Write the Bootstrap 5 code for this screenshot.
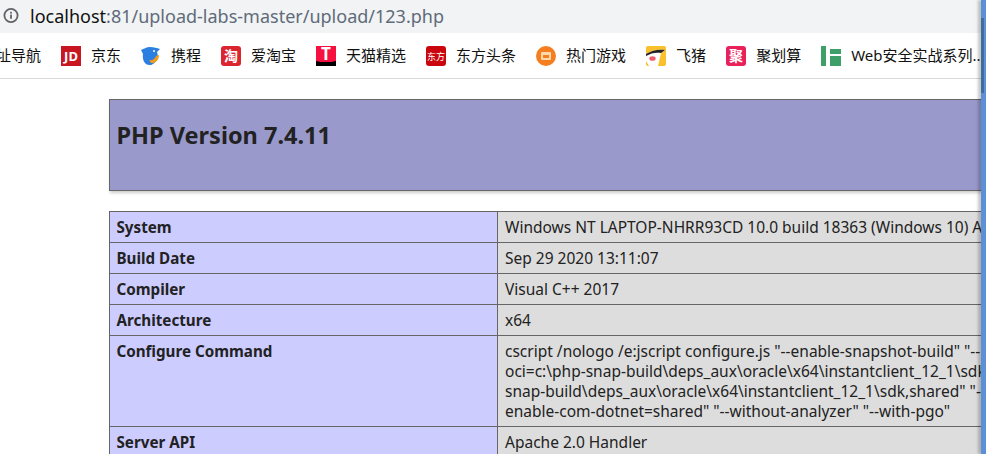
<!DOCTYPE html>
<html lang="zh"><head><meta charset="utf-8"><title>phpinfo</title>
<link href="https://cdn.jsdelivr.net/npm/bootstrap@5.3.0/dist/css/bootstrap.min.css" rel="stylesheet">
<style>
html,body{margin:0;height:454px;overflow:hidden;background:#fff}
body{font-family:"Noto Sans","Noto Sans CJK SC",sans-serif;color:#222}
.chrome-url{height:33px;background:#f1f3f4;padding-left:2px;font-size:18px;line-height:33px;color:#5f6b7a;white-space:nowrap}
.chrome-url b{font-weight:400;color:#111}
.url-ico{flex:none;margin-right:9px;margin-top:-2px}
.chrome-marks{height:46px;border-bottom:1px solid #d9d9d9;font-size:15px;color:#111;white-space:nowrap;overflow:hidden;gap:20px}
.mark-item{flex:none;gap:10px}
.mark-first{margin-left:-19px}
.mark-ico{width:20px;height:20px;flex:none;display:block}
.page-area{width:981px;overflow:hidden;padding:20px 0 0 109px}
.php-head{width:960px;height:92px;background:#9999cc;border:1px solid #666;box-shadow:1px 2px 3px #ccc;padding:0 6.5px;margin-bottom:20px}
.php-head h1{font-size:23.5px;font-weight:700;line-height:1;margin:0;padding-top:24px;color:#222}
.php-tbl{width:960px;border-collapse:collapse;table-layout:fixed;font-size:15.5px;line-height:20px}
.php-tbl td{border:1px solid #666;padding:5px 7px 5px;vertical-align:top;background:#ddd;overflow:hidden;white-space:nowrap}
.php-tbl td:first-child{width:388px;background:#ccf;font-weight:700;font-size:15.2px;padding-left:6.5px}
.bar{width:5px;height:454px;right:0;top:0;background:#5b8fd6;box-shadow:-3px 0 3px rgba(0,0,0,.22)}
.bar-thumb{width:3px;height:75px;margin-top:18px;background:#3f6d9e}
</style></head><body>
<div class="chrome-url d-flex align-items-center">
<svg width="19" height="19" viewBox="0 0 19 19" class="url-ico"><circle cx="9" cy="9.5" r="6.6" fill="none" stroke="#5f6368" stroke-width="1.8"/><rect x="8.1" y="8.6" width="1.8" height="4.2" fill="#5f6368"/><rect x="8.1" y="5.8" width="1.8" height="1.8" fill="#5f6368"/></svg>
<span><b>localhost</b>:81/upload-labs-master/upload/123.php</span>
</div>
<div class="chrome-marks d-flex align-items-center">
<div class="mark-item mark-first d-flex align-items-center"><span>网址导航</span></div>
<div class="mark-item d-flex align-items-center"><svg class="mark-ico" viewBox="0 0 20 20"><rect width="20" height="20" fill="#c81623"/><text x="10" y="15" font-size="13" text-anchor="middle" fill="#fff" font-weight="700">JD</text></svg><span>京东</span></div>
<div class="mark-item d-flex align-items-center"><svg class="mark-ico" viewBox="0 0 20 20"><path d="M0 4c3-1 5-3 9-3 4 0 7 1 10 2l-3 3c2 5 0 11-6 13C4 20 1 14 2 8z" fill="#2a7fe0"/><path d="M8 14c3 1 6-1 7-4l3-1c0 5-4 9-8 8z" fill="#f39b1f"/><circle cx="13" cy="5" r="1" fill="#fff"/></svg><span>携程</span></div>
<div class="mark-item d-flex align-items-center"><svg class="mark-ico" viewBox="0 0 20 20"><rect width="20" height="20" rx="3" fill="#dc2431"/><text x="10" y="15" font-size="14" text-anchor="middle" fill="#fff" font-weight="700">淘</text></svg><span>爱淘宝</span></div>
<div class="mark-item d-flex align-items-center"><svg class="mark-ico" viewBox="0 0 20 20"><rect width="20" height="20" fill="#000"/><path d="M0 0h20v15c-2 0-3 1-4 1H4c-1 0-2-1-4-1z" fill="#f5103f"/><text x="10" y="14" font-size="17" text-anchor="middle" fill="#fff" font-weight="700">T</text></svg><span>天猫精选</span></div>
<div class="mark-item d-flex align-items-center"><svg class="mark-ico" viewBox="0 0 20 20"><rect width="20" height="20" rx="3" fill="#c9060e"/><text x="10" y="13.5" font-size="9" text-anchor="middle" fill="#fff">东方</text></svg><span>东方头条</span></div>
<div class="mark-item d-flex align-items-center"><svg class="mark-ico" viewBox="0 0 20 20"><circle cx="10" cy="10" r="10" fill="#f57f20"/><rect x="5" y="6" width="10" height="8" rx="1" fill="#fbd9a8"/><rect x="7" y="9" width="6" height="3" fill="#f57f20"/></svg><span>热门游戏</span></div>
<div class="mark-item d-flex align-items-center"><svg class="mark-ico" viewBox="0 0 20 20"><rect width="20" height="20" rx="2" fill="#fbc02d"/><path d="M0 8C6 4 13 3 19 4l-4 3-3 13H3L0 15z" fill="#fff"/><path d="M0 8C6 4 13 3 19 4l-4 3C10 6 5 7 0 10z" fill="#222"/><ellipse cx="6.500" cy="12.500" rx="3.200" ry="2.300" fill="#ef5e6e"/></svg><span>飞猪</span></div>
<div class="mark-item d-flex align-items-center"><svg class="mark-ico" viewBox="0 0 20 20"><rect width="20" height="20" rx="3" fill="#e8215a"/><text x="10" y="15" font-size="14" text-anchor="middle" fill="#fff" font-weight="700">聚</text></svg><span>聚划算</span></div>
<div class="mark-item d-flex align-items-center"><svg class="mark-ico" viewBox="0 0 20 20"><path d="M0 0h5v20H0zM9 3h11v5H9zM9 10h11v10H9z" fill="#3f9f68"/></svg><span>Web安全实战系列...</span></div>
</div>
<div class="page-area">
<div class="php-head"><h1>PHP Version 7.4.11</h1></div>
<table class="php-tbl">
<tr><td>System</td><td>Windows NT LAPTOP-NHRR93CD 10.0 build 18363 (Windows 10) AMD64</td></tr>
<tr><td>Build Date</td><td>Sep 29 2020 13:11:07</td></tr>
<tr><td>Compiler</td><td>Visual C++ 2017</td></tr>
<tr><td>Architecture</td><td>x64</td></tr>
<tr><td>Configure Command</td><td>cscript /nologo /e:jscript configure.js "--enable-snapshot-build" "--<br>oci=c:\php-snap-build\deps_aux\oracle\x64\instantclient_12_1\sdk,shared"<br>snap-build\deps_aux\oracle\x64\instantclient_12_1\sdk,shared" "--<br>enable-com-dotnet=shared" "--without-analyzer" "--with-pgo"</td></tr>
<tr><td>Server API</td><td>Apache 2.0 Handler</td></tr>
</table>
</div>
<div class="bar position-absolute"><div class="bar-thumb"></div></div>
</body></html>
